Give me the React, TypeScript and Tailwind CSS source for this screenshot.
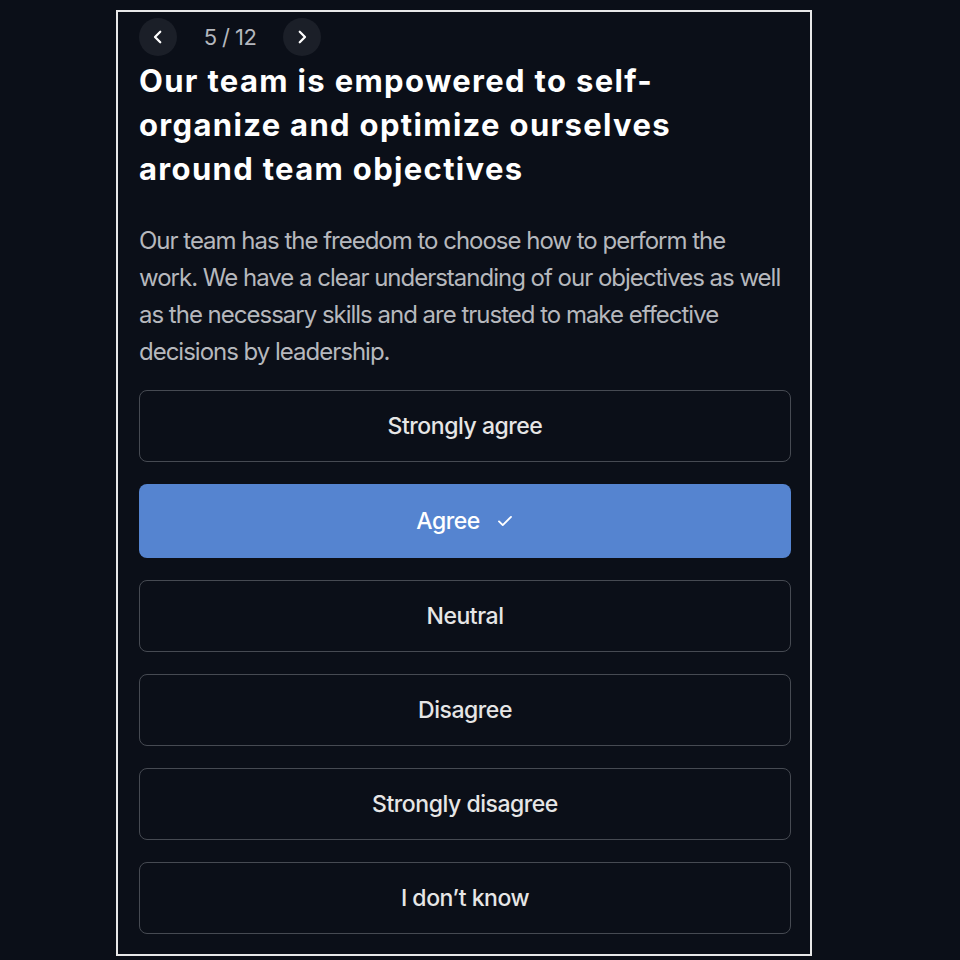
import { useState } from "react";

const options = [
  "Strongly agree",
  "Agree",
  "Neutral",
  "Disagree",
  "Strongly disagree",
  "I don’t know",
];

function Chevron({ dir }: { dir: "left" | "right" }) {
  return (
    <svg width="18" height="18" viewBox="0 0 24 24" fill="none" stroke="currentColor" strokeWidth="3" strokeLinecap="round" strokeLinejoin="round">
      {dir === "left" ? <path d="M15 5l-7 7 7 7" /> : <path d="M9 5l7 7-7 7" />}
    </svg>
  );
}

export default function App() {
  const [selected, setSelected] = useState(1);

  return (
    <div className="min-h-screen w-full bg-[#0b0f18] pt-[10px] font-['Inter',sans-serif]">
      <div className="ml-[116px] w-[696px] h-[946px] border-2 border-[#e8e8e8] px-[21px] pt-[6px]">
        {/* question nav */}
        <div className="flex items-center h-[38px]">
          <button className="w-[38px] h-[38px] rounded-full bg-[#1b1f28] text-white flex items-center justify-center">
            <Chevron dir="left" />
          </button>
          <span className="w-[106px] text-center text-[22px] text-[#b4b7bd] tracking-tight">5 / 12</span>
          <button className="w-[38px] h-[38px] rounded-full bg-[#1b1f28] text-white flex items-center justify-center">
            <Chevron dir="right" />
          </button>
        </div>

        <h1 className="mt-[3px] text-[31px] leading-[44px] font-bold text-white tracking-[0.043em]">
          Our team is empowered to self-organize and optimize ourselves around team objectives
        </h1>

        <p className="mt-[31px] text-[24px] leading-[37px] text-[#b6b8bd] tracking-[-0.042em]">
          Our team has the freedom to choose how to perform the work. We have a clear understanding of our objectives as well as the necessary skills and are trusted to make effective decisions by leadership.
        </p>

        <div className="mt-[20px] flex flex-col gap-[22px] w-[652px]">
          {options.map((o, i) => (
            <button
              key={o}
              onClick={() => setSelected(i)}
              className={
                i === selected
                  ? "h-[74px] rounded-lg bg-[#5584d0] text-white text-[23px] font-medium flex items-center justify-center gap-[16px] tracking-[-0.02em]"
                  : "h-[72px] rounded-lg border border-[#464a52] text-[#e6e6e6] text-[23px] font-medium flex items-center justify-center tracking-[-0.02em]"
              }
            >
              {o}
              {i === selected && (
                <svg width="18" height="18" viewBox="0 0 24 24" fill="none" stroke="currentColor" strokeWidth="2.5" strokeLinecap="round" strokeLinejoin="round">
                  <path d="M4 12.5l5 5L20 6.5" />
                </svg>
              )}
            </button>
          ))}
        </div>
      </div>
    </div>
  );
}
